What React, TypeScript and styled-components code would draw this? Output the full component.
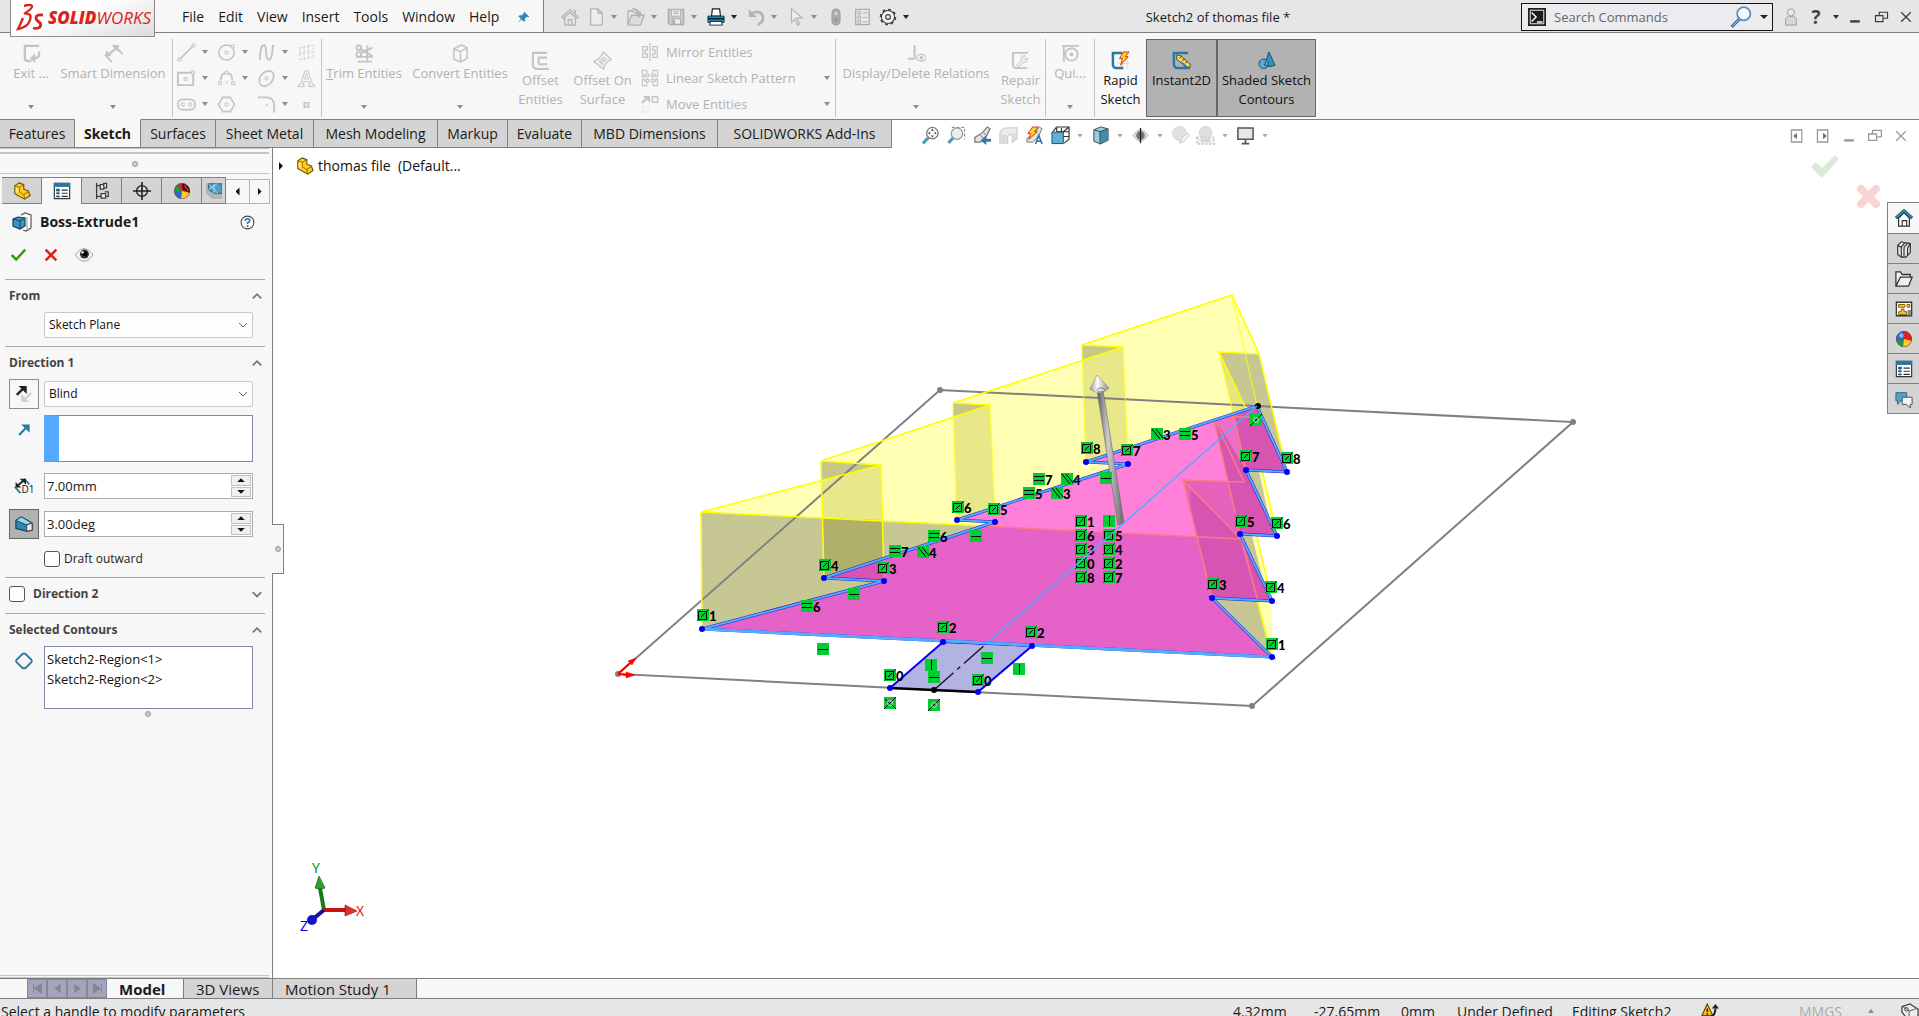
import React from "react";
import styled, { createGlobalStyle, css } from "styled-components";

const GlobalStyle = createGlobalStyle`
  * { box-sizing: border-box; }
  html, body, #root { height: 100%; margin: 0; }
  body {
    overflow: hidden;
    background: #fff;
    color: #1a1a1a;
    font: 14px/20px "Open Sans", "Noto Sans", sans-serif;
  }
  button, input, select { font: inherit; color: inherit; margin: 0; }
  button { padding: 0; border: 0; background: none; }
  ul { list-style: none; margin: 0; padding: 0; }
  h1, h2, h3, p { margin: 0; font-size: inherit; font-weight: inherit; }
  svg { display: block; flex: none; }
`;

/* ---------- icons ---------- */

const G = "#c4c4c4";
const D = "#3c3c3c";
const B = "#2878a0";

const glyphs: Record<string, React.ReactNode> = {
  exit: <><path d="M18 2H3v13q0 3 4 3h3" stroke={G} strokeWidth="2.4" /><path d="M18 8v3q0 4-6 4" stroke={G} strokeWidth="2.4" /><path d="M14 10l-6 5 6 5z" fill={G} /></>,
  smart: <><path d="M1 11l7 8M12 3l8 8" stroke={G} strokeWidth="2" /><path d="M5 11L12 5" stroke={G} strokeWidth="2.4" /><path d="M2 13V6l6 7zM8 1h8l-2 7z" fill={G} /></>,
  line: <><path d="M3 17L17 3" stroke={G} strokeWidth="1.600" /><path d="M1 16h3v3H1zM16 1h3v3h-3z" stroke={G} fill="#f7f7f7" /></>,
  circle: <><circle cx="10" cy="10" r="8" stroke={G} strokeWidth="1.600" /><path d="M8.500 8.500h3v3h-3zM15 2h3v3h-3z" stroke={G} fill="#f7f7f7" /></>,
  spline: <path d="M3 18C3 8 5 1 8 2.500s0 14 4 15 4-9 5-15.500" stroke={G} strokeWidth="2" />,
  plane: <><path d="M3 5l14-3v13L3 18zM7.500 4v13M12 3v13M3 11l14-2" stroke={G} strokeDasharray="2 1.500" /></>,
  rect: <><path d="M1 4h16v13H1z" stroke={G} strokeWidth="2" /><path d="M7.500 9h3v3h-3zM15.500 2h3v3h-3z" stroke={G} fill="#f7f7f7" /></>,
  arc: <><path d="M4 12q0-8 6-8t6 8" stroke={G} strokeWidth="1.800" /><path d="M1.500 13.500h3v3h-3zM15.500 13.500h3v3h-3zM8.500 2.500h3v3h-3z" stroke={G} fill="#f7f7f7" /><path d="M8 12l4 4M12 12l-4 4" stroke={G} strokeWidth=".6" /></>,
  ellipse: <><ellipse cx="10" cy="10" rx="9" ry="6.500" transform="rotate(-50 10 10)" stroke={G} strokeWidth="1.800" /><path d="M8.500 8.500h3v3h-3z" stroke={G} /></>,
  text: <><path d="M1.500 18.500v-2h2L8.500 2h3l5 14.500h2v2h-6v-2H14l-1-3H7l-1 3h1.500v2zM8 10.500h4l-2-6z" stroke={G} /></>,
  slot: <><rect x="1" y="4.500" width="18" height="11" rx="5" stroke={G} strokeWidth="1.800" /><path d="M4.500 8.500h3v3h-3zM12.500 8.500h3v3h-3z" stroke={G} /></>,
  hexagon: <><path d="M6 2.500h8l4.500 7.500-4.500 7.500H6L1.500 10z" stroke={G} strokeWidth="1.600" /><path d="M8.500 8.500h3v3h-3z" stroke={G} /></>,
  fillet: <><path d="M1 2.500h9q8 0 8 9v7" stroke={G} strokeWidth="2" /><path d="M9 9l3 3M12 9l-3 3" stroke={G} strokeWidth=".7" /></>,
  point: <path d="M7.500 8h5v5h-5z" stroke={G} strokeWidth="1.400" fill="#e4e4e4" />,
  trim: <><path d="M1 13.500h18M13 1v18M3 18.500h15" stroke={G} strokeWidth="1.800" /><circle cx="4" cy="4" r="2.500" stroke={G} strokeWidth="2" /><circle cx="4" cy="11" r="2.500" stroke={G} strokeWidth="2" /><path d="M6 5.500l12 7M6 9.500L18 4" stroke={G} strokeWidth="2.400" /></>,
  convert: <><path d="M3 5l8-4 6 3v11l-7 4-7-3zM3 5l7 3 7-4M10 8v11" stroke={G} strokeWidth="1.600" /></>,
  offset: <path d="M17 2H2v12q0 5 5 5h12M17 7H8v5q0 2 2 2h7" stroke={G} strokeWidth="2.200" />,
  surface: <><path d="M11 1l8 8q-7 3-8 10L1 11Q8 8 11 1z" stroke={G} strokeWidth="1.500" /><path d="M11.500 6l3 3q-4 2-5 5.500l-3.500-4q4-1.500 5.500-4.500z" stroke={G} fill="#ddd" /></>,
  mirror: <path d="M10 0v20M2 4v12h5v-4H4.500V8H7V4zM18 4v12h-5v-4h2.500V8H13V4z" stroke={G} strokeWidth="1.400" />,
  pattern: <path d="M1.500 1.500v7h2v-2h2v2h3v-3h-2v-4zM18.500 1.500v7h-2v-2h-2v2h-3v-3h2v-4zM1.500 18.500v-7h2v2h2v-2h3v3h-2v4zM18.500 18.500v-7h-2v2h-2v-2h-3v3h2v4z" stroke={G} strokeWidth="1.200" />,
  move: <><path d="M12.500 2h6v6h-6z" stroke={G} strokeWidth="1.600" /><path d="M1 9l5-5" stroke={G} strokeWidth="2.400" /><path d="M2 1h8v8z" fill={G} /><path d="M2 13h6v6H2z" stroke={G} strokeDasharray="1 2" /></>,
  relations: <><path d="M8 1v13M1 15.500h8" stroke={G} strokeWidth="2.200" /><ellipse cx="15" cy="14.500" rx="5" ry="3.500" stroke={G} strokeWidth="1.400" /><circle cx="15" cy="14.500" r="2" fill={G} /></>,
  repair: <><path d="M18 2H2v12q0 4 4 4h11" stroke={G} strokeWidth="2" /><path d="M15 5a3.500 3.500 0 0 0-4 5l-5 5 2 2 5-5a3.500 3.500 0 0 0 4-5l-2 2-2-2z" fill="#eee" stroke={G} /></>,
  snaps: <><path d="M1 2h18M3 2v17" stroke={G} strokeWidth="2" /><circle cx="11" cy="11" r="6.500" stroke={G} strokeWidth="2" /><circle cx="11" cy="11" r="2" fill={G} /></>,
  rapid: <><path d="M12 18V8M7 13h12M17 6v13" stroke="#d8d8d8" /><path d="M12 2H2v12q0 4 4 4h7" stroke={B} strokeWidth="2.600" /><path d="M13 1h6l-4 5h3l-8 9 2-7H9z" fill="#fc3" stroke="#c33c10" /></>,
  instant: <><path d="M17 2H2v12q0 4 4 4h13" stroke={B} strokeWidth="2.600" /><path d="M5 4l4 1 10 9v3H16L5 9z" fill="#fd4" stroke="#444" /><path d="M8 8l2-3M11 10.500l2-2.500M14 13l2-2.500" stroke="#444" /><path d="M9 10l9 8h-4z" fill={B} /></>,
  shaded: <><path d="M12.500 1L19 15q-6 3-11 0z" fill="#3590bd" stroke="#17506e" /><circle cx="7" cy="13.500" r="5" fill="#5aabcf" stroke="#17506e" /><path d="M9.500 10L8 15q2 1 4 .5" stroke="#17506e" /></>,
  home: <path d="M1 10l9-8 9 8-1.500 1.500L10 5l-7.500 6.500zM4 11v8h12v-8M8 19v-6h4v6M14 3h2v3" stroke="#b4b4b4" strokeWidth="1.400" />,
  file: <path d="M4 1h8l5 5v13H4zM12 1v5h5" stroke="#b4b4b4" strokeWidth="1.500" fill="#eee" />,
  open: <><path d="M1 3h5l2 2h7v3M1 3v16l4-11h14l-4 11H1" stroke="#b4b4b4" strokeWidth="1.500" fill="#dcdcdc" /><path d="M6 1q7 0 7 6" stroke="#b4b4b4" strokeWidth="2" /><path d="M9 6l4 5 4-5z" fill="#b4b4b4" /></>,
  save: <><path d="M1.500 1.500h17v17h-15l-2-2z" fill="#c9c9c9" stroke="#aaa" strokeWidth="1.400" /><path d="M5 2h10v7H5z" fill="#eee" stroke="#b4b4b4" /><path d="M7 4h6M7 6h6" stroke="#aaa" /><path d="M6 12h9v6H6z" fill="#eee" stroke="#aaa" /><path d="M8 13v5" stroke="#aaa" strokeWidth="2" /></>,
  print: <><path d="M5 9L6 1h8l1 8z" fill="#fff" stroke="#222" strokeWidth="1.300" /><path d="M1 9h18v7H1z" fill="#2b87ad" stroke="#103a50" /><path d="M1 12h18" stroke="#0a2b3c" strokeWidth="2" /><path d="M4 15h12l1 4H3z" fill="#fff" stroke="#222" /></>,
  undo: <><path d="M5 6q9-4 12 2t-5 11" stroke="#b4b4b4" strokeWidth="3" /><path d="M2 1v9h9z" fill="#b4b4b4" /></>,
  cursor: <path d="M5 1v15l4-4 3 7 2-1-3-7h6z" fill="#eee" stroke="#b4b4b4" strokeWidth="1.300" />,
  traffic: <><rect x="5.500" y="1" width="9" height="18" rx="4.500" fill="#aaa" stroke="#999" /><circle cx="10" cy="6" r="2.200" fill="#ccc" /><circle cx="10" cy="13.500" r="2.200" fill="#999" /></>,
  options: <><path d="M3 1.500h15v17H3z" fill="#e9e9e9" stroke="#aaa" strokeWidth="1.400" /><path d="M5.500 4h3v3h-3zM5.500 9h3v3h-3zM5.500 14h3v3h-3zM11 5.500h5M11 10.500h5M11 15.500h5" stroke="#aaa" /></>,
  gear: <><circle cx="10" cy="10" r="7.300" fill="#f4f4f4" stroke={D} strokeWidth="1.200" /><circle cx="10" cy="10" r="8.300" stroke={D} strokeWidth="1.800" strokeDasharray="3.200 3.300" /><circle cx="10" cy="10" r="2.600" stroke={D} strokeWidth="1.300" /></>,
  pin: <path d="M11 1l8 8-2 .5-2-.5-3 3q1 3-1 5l-4-4-6 6 5-7-4-4q2-2 5-1l3-3z" fill="#2e86b5" />,
  prompt: <><path d="M1 1h18v18H1z" fill="#1c1c1c" stroke="#222" strokeWidth="2" /><path d="M2.500 2.500h15v15h-15z" stroke="#fff" /><path d="M4 5l5 5-5 5M10 15.500h6" stroke="#fff" strokeWidth="1.600" /></>,
  magnify: <><circle cx="12.500" cy="7" r="6" fill="#f4f9fd" stroke="#5c8fb8" strokeWidth="1.600" /><path d="M8.500 12L1.500 19" stroke="#34658c" strokeWidth="2.800" /><path d="M8.500 12L2 18.500" stroke="#9cc0dd" strokeWidth="1" /></>,
  person: <><path d="M4 19v-5q0-5 6-5t6 5v5z" fill="#d8d8d8" stroke="#999" /><circle cx="10" cy="5" r="4" fill="#e8e8e8" stroke="#999" /></>,
  minimise: <path d="M4 14h12v3H4z" fill={D} />,
  restore: <path d="M7 7V3h11v8h-5M2 7.500h10v8H2z" stroke={D} strokeWidth="1.600" />,
  close: <path d="M4 4l12 12M16 4L4 16" stroke={D} strokeWidth="1.600" />,
  minLight: <path d="M4 14h12v3H4z" fill="#999" />,
  restoreLight: <path d="M7 7V3h11v8h-5M2 7.500h10v8H2z" stroke="#999" strokeWidth="1.600" />,
  closeLight: <path d="M4 4l12 12M16 4L4 16" stroke="#999" strokeWidth="1.600" />,
  paneLeft: <><path d="M3 2.500h13v15H3z" stroke="#999" strokeWidth="1.600" /><path d="M10 6v8l-5-4z" fill="#777" /></>,
  paneRight: <><path d="M3 2.500h13v15H3z" stroke="#999" strokeWidth="1.600" /><path d="M10 6v8l5-4z" fill="#777" /></>,
  zoomFit: <><circle cx="12" cy="7.500" r="6" fill="#fafafa" stroke="#777" strokeWidth="1.300" /><path d="M12 3l1.500 2h-3zM12 12l1.500-2h-3zM7.500 7.500l2-1.500v3zM16.500 7.500l-2-1.500v3z" fill="#333" /><path d="M8 12l-6 6.500" stroke="#4c9cc0" strokeWidth="3.200" /></>,
  zoomArea: <><path d="M5 1.500h13.500V14" stroke="#777" strokeDasharray="3 2" /><circle cx="10.500" cy="8" r="6" fill="#e6eef2" stroke="#999" strokeWidth="1.300" /><path d="M6.500 12.500L1.500 18" stroke="#4c9cc0" strokeWidth="3.200" /></>,
  prev: <><path d="M15 1l3 2-4 8-6 6H2v-5l8-5z" fill="#e2e2e2" stroke="#777" strokeWidth="1.300" /><path d="M7 9l4 4M11 7l3 3" stroke="#777" /><path d="M19 15h-6" stroke={B} strokeWidth="3" /><path d="M14 10v10l-6-5z" fill={B} /></>,
  section: <><path d="M1 7q2-5 9-5h9v11l-5 4V9q-4-1-5 2v7H1z" fill="#ededed" stroke="#d0d0d0" strokeWidth="1.400" /><path d="M2 9h6v8H2zM14 8h4v5l-4 3z" fill="#dcdcdc" /></>,
  dynamic: <><path d="M15 1l3 2-4 8-6 6H2v-4l8-6z" fill="#e2e2e2" stroke="#777" /><path d="M8 1h6l-4 5h3l-9 8 2-6H3z" fill="#fc3" stroke="#c33c10" /><path d="M11 19l3.500-9L18 19M12 16h5" stroke={B} strokeWidth="1.700" /></>,
  orient: <><path d="M6 1h13v13l-5 4M6 1L2 6M11 2v13M19 6H6M19 11H6M6 2v4M13 6l6-5" stroke="#333" strokeWidth="1.200" /><path d="M1 6.500h12v12H1z" fill="#5fb1d4" stroke="#1c4d66" /></>,
  display: <><path d="M3 4l7-3 8 2v12l-8 4-7-3z" fill="#8fd0e8" stroke="#444" /><path d="M9 6l9-3v12l-8 4z" fill="#3f8cab" /><path d="M9.500 6v13M3 4l6.500 2L18 3" stroke="#444" /></>,
  hideShow: <><path d="M2 10q4-6 8-6t8 6q-4 6-8 6t-8-6z" fill="#ddd" stroke="#bbb" /><circle cx="10" cy="10" r="4.500" fill="#777" /><path d="M10 2v16" stroke="#222" strokeWidth="1.400" /></>,
  appearance: <><circle cx="9" cy="8" r="7.500" fill="#e2e2e2" stroke="#d8d8d8" /><path d="M9 18l2-5 6-6 2.500 2.500-6 7z" fill="#f2f2f2" stroke="#c4c4c4" /></>,
  scene: <><circle cx="10" cy="7" r="6.500" fill="#dedede" stroke="#d0d0d0" /><path d="M1 12h18v7H1z" fill="#efefef" stroke="#ccc" strokeWidth="2" strokeDasharray="2 2" /><path d="M5 13h10v4H5z" fill="#d6d6d6" /></>,
  monitor: <><path d="M2 2h16v12H2z" fill="#e8e8e8" stroke="#555" strokeWidth="1.600" /><path d="M10 14v4M6 18.500h8" stroke="#555" strokeWidth="1.800" /></>,
  part: <><path d="M2 4l5-3 5 2v5l5 2 2 5-6 4-11-6z" fill="#fc2" stroke="#6b4c00" strokeWidth="1.200" /><path d="M2 4l5 2 5-3M7 6v5l5 3 6-4M12 14l1 5" stroke="#8a6300" /><path d="M3 5.500l3 1.500v4l-3 1z" fill="#ffe27a" /></>,
  props: <><path d="M1.500 1.500h17v17h-17z" fill="#fff" stroke="#333" strokeWidth="1.300" /><path d="M1 1h18v4.500H1z" fill={B} /><path d="M4 8h3v2H4zM4 12h3v1H4zM4 15.500h3v1H4z" fill={B} stroke="#17506e" /><path d="M9.500 9h7M9.500 12.500h7M9.500 16h7" stroke="#333" strokeWidth="1.200" /></>,
  config: <><path d="M4 1v18M4 4h4M4 16h5" stroke={D} strokeWidth="1.400" /><path d="M8 3h4v5H8zM11 1.500h4v5h-3M9 13h5v5H9zM13 11h4v5h-3" stroke={D} strokeWidth="1.400" fill="#efefef" /></>,
  target: <><circle cx="10" cy="10" r="6" stroke="#222" strokeWidth="1.600" /><path d="M10 0v20M0 10h20" stroke="#222" strokeWidth="1.800" /></>,
  ball: <><circle cx="10" cy="10" r="8.500" fill="#d22" stroke="#555" /><path d="M10 10L2 12a8.500 8.500 0 0 0 7 6.400z" fill="#1a9c38" /><path d="M10 10l-1 8.400A8.500 8.500 0 0 0 18 12z" fill="#fc2" /><path d="M10 10L9 1.600A8.500 8.500 0 0 0 2 12z" fill="#2468d8" /><circle cx="7" cy="6" r="2.500" fill="#fff" opacity=".5" /></>,
  ballCut: <><circle cx="10" cy="10" r="8.500" fill="#d22" stroke="#555" /><path d="M10 10L2 12a8.500 8.500 0 0 0 7 6.400z" fill="#2468d8" /><path d="M10 10l-8 2A8.500 8.500 0 0 1 4 4z" fill="#1a9c38" /><path d="M10 10l-1 8.400A8.500 8.500 0 0 0 18 12z" fill="#fc2" /><path d="M11 9l-1-7a8.500 8.500 0 0 1 8.400 10z" fill="#2a1414" /><path d="M13 4l4 6" stroke="#d22" strokeWidth="2" /></>,
  view3d: <><path d="M0 0h20v20H8l-8-7z" fill="#b4b4b8" /><path d="M3 1h17v12H10L3 8z" fill="#4a9fc4" stroke="#17506e" /><path d="M3 1l12 12M3 8L14 1M10 13V1" stroke="#cfe9f4" /></>,
  boss: <><path d="M9 3l4-2 6 2v13l-5 3-3-1" fill="#fff" stroke="#555" strokeWidth="1.200" /><path d="M15 5v13" stroke="#999" /><path d="M1 7l5-2 7 1v8l-5 3-7-3z" fill="#3c97bf" stroke="#143f57" strokeWidth="1.200" /><path d="M1 7l7 2 5-3M8 9v8" stroke="#143f57" /></>,
  help: <><circle cx="10" cy="10" r="8.500" fill="#fff" stroke="#444" strokeWidth="1.400" /><path d="M7 8q0-3 3-3t3 2.500Q13 9.500 10 10.500V12" stroke={B} strokeWidth="2.200" /><circle cx="10" cy="14.800" r="1.400" fill={B} /></>,
  ok: <path d="M2 11l2-2 4 4L17 3l2 2L8 17z" fill="#2f9e0c" />,
  cancel: <path d="M4 4l12 12M16 4L4 16" stroke="#e02010" strokeWidth="2.800" />,
  eye: <><path d="M0 10q5-7 10-7t10 7q-5 7-10 7T0 10z" fill="#f2f2f2" stroke="#999" /><circle cx="10.500" cy="9" r="5" fill="#333" /><circle cx="11" cy="8.500" r="2.800" fill="#000" /><circle cx="8.500" cy="7" r="1.300" fill="#fff" /></>,
  reverse: <><path d="M2 11l7-7" stroke="#222" strokeWidth="2.600" /><path d="M4 1h9v9z" fill="#222" /><path d="M18 9l-6 6" stroke="#d0d0d0" strokeWidth="2.400" /><path d="M7 10v9h9z" fill="#d0d0d0" /></>,
  dirArrow: <><path d="M3 17l9-9" stroke={B} strokeWidth="3" /><path d="M6 2h12v12z" fill={B} /></>,
  depth: <><path d="M1 11l7 8M13 1l6 7" stroke={B} strokeWidth="2.200" /><path d="M5 9l6-5" stroke="#222" strokeWidth="2.400" /><path d="M2 12V5l7 7zM7 1h8v7z" fill="#222" /></>,
  draft: <><path d="M1 6l6-4 12 7v8l-6 1-12-3z" fill="#2f86ad" stroke="#123e55" strokeWidth="1.200" /><path d="M1 6l6-4 12 7-6 2z" fill="#9ad4ea" stroke="#123e55" /><path d="M13 11l6-2v8l-6 1z" fill="#eee" stroke="#333" /></>,
  diamond: <path d="M10 1.500q1 0 2 1l6 6q1.500 1.500 0 3l-6 6q-2 1.500-4 0l-6-6q-1.500-1.500 0-3l6-6q1-1 2-1z" stroke={B} strokeWidth="2" />,
  house: <><path d="M4 10v9h12v-9l-6-6z" fill="#fff" stroke="#333" strokeWidth="1.400" /><path d="M1 10l9-8 9 8" stroke="#17506e" strokeWidth="3.400" /><path d="M1.500 9.500l8.500-7.500 8.500 7.500" stroke="#3c97bf" strokeWidth="1.300" /><path d="M8 19v-6h5v6" stroke="#333" strokeWidth="1.300" /></>,
  books: <path d="M3 6l4-4 4 1 6 1v10l-5 5H7l-4-3zM3 6l4 2v11M7 8l4-5M10 8v11M14 9v8M10 8l4-4M14 9l3-5" stroke="#333" strokeWidth="1.300" fill="#e6e6e6" />,
  folder: <path d="M1 18V2h5l2 3h9v3M1 18L6 8h13l-4 10z" stroke="#333" strokeWidth="1.400" fill="#eee" />,
  palette: <><path d="M1.500 2.500h17v15h-17z" fill="#fff" stroke="#333" strokeWidth="1.400" /><path d="M4 5h7v3H4zM13.500 5h3v3h-3zM4 13h3v-3h3v3h3v3H4z" fill="#fc2" stroke="#7a5600" /><path d="M14 11h4v6h-4z" fill="#888" /></>,
  chat: <><path d="M1 3h12v9H6l-3 4v-4H1z" fill="#4da3c8" stroke="#2b5d74" /><path d="M8 8h11v8h-2v4l-4-4H8z" fill="#f4f4f4" stroke="#444" /></>,
  first: <path d="M4 3v14M16 3v14L6 10z" fill="#82849e" stroke="#82849e" strokeWidth="1.600" />,
  back: <path d="M15 3v14L5 10z" fill="#82849e" />,
  next: <path d="M5 3v14l10-7z" fill="#82849e" />,
  last: <path d="M16 3v14M4 3v14l10-7z" fill="#82849e" stroke="#82849e" strokeWidth="1.600" />,
  rebuild: <><path d="M6 13h9v7H6z" fill={B} /><path d="M7 1l6 13H1z" fill="#fb2" stroke="#664400" strokeWidth="1.300" /><path d="M7 6v4M7 11v2" stroke="#222" strokeWidth="1.600" /><path d="M11 15q5-2 5-9" stroke="#222" strokeWidth="2.200" /><path d="M12 6l4-5 4 5z" fill="#222" /></>,
  tag: <><path d="M1 4l9-3 9 6v7l-5 5H8L1 10z" fill="#eee" stroke="#444" strokeWidth="1.400" /><circle cx="6" cy="7" r="2" stroke="#444" /><path d="M9 19V9l9-3M9 9L2 4" stroke="#444" /></>,
  up: <path d="M3 14l7-7 7 7" stroke="#777" strokeWidth="3" />,
  down: <path d="M3 7l7 7 7-7" stroke="#777" strokeWidth="3" />,
  chevron: <path d="M2 6l8 8 8-8" stroke="#555" strokeWidth="1.800" />,
};

const Icon = ({ name, size = 18 }: { name: string; size?: number }) => (
  <svg width={size} height={size} viewBox="0 0 20 20" fill="none" aria-hidden="true">{glyphs[name]}</svg>
);

const Caret = styled.span<{ $color?: string; $up?: boolean; $w?: number }>`
  width: ${p => p.$w ?? 8}px;
  height: 4px;
  flex: none;
  background: ${p => p.$color ?? "#8c8c8c"};
  clip-path: ${p => (p.$up ? "polygon(0 100%, 100% 100%, 50% 0)" : "polygon(0 0, 100% 0, 50% 100%)")};
`;

const SideCaret = styled.span<{ $left?: boolean }>`
  width: 4px;
  height: 8px;
  background: #111;
  clip-path: ${p => (p.$left ? "polygon(100% 0, 100% 100%, 0 50%)" : "polygon(0 0, 0 100%, 100% 50%)")};
`;

/* ---------- frame ---------- */

const Frame = styled.div`
  height: 100vh;
  display: flex;
  flex-direction: column;
  overflow: hidden;
`;

const TitleBar = styled.header`
  display: flex;
  align-items: center;
  height: 33px;
  flex: none;
  padding: 2px 0 0 10px;
  background: #e6e6e6;
  border-bottom: 1px solid #808080;
`;

const Logo = styled.h1`
  position: relative;
  z-index: 1;
  align-self: flex-start;
  display: flex;
  align-items: center;
  gap: 4px;
  width: 145px;
  height: 37px;
  margin-top: -2px;
  padding: 0 5px;
  border: 1px solid #8c8c8c;
  border-top: 0;
  background: linear-gradient(160deg, #fff 40%, #dcdcdc);
  color: #d9241c;
  font: italic 17px/24px "Open Sans", sans-serif;
  b { font-weight: 800; }
`;

const MenuBar = styled.nav`
  display: flex;
  align-items: center;
  align-self: stretch;
  gap: 14px;
  width: 389px;
  margin-top: -2px;
  padding: 2px 13px 0 27px;
  background: #f7f7f7;
  border-right: 1px solid #808080;
  svg { margin-left: auto; }
`;

const MenuItem = styled.button`
  line-height: 20px;
`;

const QuickBar = styled.div`
  display: flex;
  align-items: center;
  padding: 0 0 0 17px;
`;

const Tool = styled.button<{ $w?: number }>`
  display: flex;
  align-items: center;
  gap: 6px;
  width: ${p => p.$w ?? 20}px;
  height: 22px;
  flex: none;
`;

const DocTitle = styled.p`
  flex: 1;
  min-width: 0;
  text-align: center;
  white-space: nowrap;
  font-size: 13px;
`;

const SearchBox = styled.label`
  display: flex;
  align-items: center;
  gap: 8px;
  width: 252px;
  height: 28px;
  padding: 0 4px 0 6px;
  border: 1px solid #111;
  background: #ebecf0;
  input {
    flex: 1;
    min-width: 0;
    padding: 0;
    border: 0;
    outline: 0;
    background: none;
    font-size: 13px;
  }
  input::placeholder { color: #666; opacity: 1; }
`;

const WindowTools = styled.div`
  display: flex;
  align-items: center;
  padding-left: 8px;
`;

const WindowButton = styled.button<{ $w: number }>`
  display: flex;
  justify-content: center;
  align-items: center;
  width: ${p => p.$w}px;
  height: 24px;
  color: #444;
  font-size: 19px;
  font-weight: 700;
`;

/* ---------- ribbon ---------- */

const Ribbon = styled.div`
  display: flex;
  flex: none;
  height: 86px;
  padding: 6px 0 2px 8px;
  background: #f7f7f7;
`;

const Rule = styled.span`
  width: 1px;
  flex: none;
  background: #c4c4c4;
`;

const RibbonButton = styled.button<{ $w: number; $low?: boolean; $on?: boolean; $live?: boolean }>`
  display: flex;
  flex-direction: column;
  align-items: center;
  flex: none;
  width: ${p => p.$w}px;
  padding-top: ${p => (p.$low ? 12 : 5)}px;
  color: ${p => (p.$live ? "#111" : "#b2b2b2")};
  font-size: 13px;
  line-height: 19px;
  ${p => p.$on && css`
    background: #b2b2b2;
    border: 1px solid #666;
    padding-top: 11px;
  `}
  span.label { white-space: nowrap; margin-top: 1px; text-align: center; }
  > ${Caret} { margin-top: auto; margin-bottom: 8px; }
`;

const SketchGrid = styled.div`
  display: grid;
  grid-template-columns: repeat(3, 40px) 20px;
  grid-template-rows: repeat(3, 26px);
  align-items: center;
  padding: 0 4px;
`;

const StackColumn = styled.div`
  display: grid;
  grid-template-rows: repeat(3, 26px);
  width: 197px;
  padding: 0 5px 0 3px;
`;

const StackButton = styled.button`
  display: flex;
  align-items: center;
  gap: 7px;
  color: #b2b2b2;
  font-size: 13px;
  ${Caret} { margin-left: auto; }
`;

const TabRow = styled.div`
  display: flex;
  align-items: stretch;
  flex: none;
  height: 29px;
`;

const RibbonTabs = styled.nav`
  display: flex;
  border-bottom: 1px solid #808080;
`;

const RibbonTab = styled.button<{ $w: number; $active?: boolean }>`
  width: ${p => p.$w}px;
  background: ${p => (p.$active ? "#f7f7f7" : "#d4d4d4")};
  border-right: 1px solid #808080;
  border-top: 1px solid ${p => (p.$active ? "#f7f7f7" : "#808080")};
  font-weight: ${p => (p.$active ? 700 : 400)};
  font-size: 14px;
  white-space: nowrap;
`;

const ViewTools = styled.div`
  display: flex;
  align-items: center;
  flex: 1;
  padding: 3px 8px 0 29px;
  border-top: 1px solid #808080;
`;

const ViewTool = styled(Tool)`
  gap: 7px;
`;

const Spacer = styled.span`
  flex: 1;
`;

/* ---------- property panel ---------- */

const Workspace = styled.main`
  display: flex;
  flex: 1;
  min-height: 0;
`;

const Panel = styled.aside`
  position: relative;
  width: 273px;
  flex: none;
  display: flex;
  flex-direction: column;
  background: #f7f7f7;
  border-right: 1px solid #808080;
  font-size: 12px;
`;

const Grip = styled.div<{ $h: number }>`
  display: flex;
  justify-content: center;
  align-items: center;
  height: ${p => p.$h}px;
  margin-right: 3px;
  border: solid #c4c4c4;
  border-width: 1px 0;
`;

const Dot = styled.span`
  width: 6px;
  height: 6px;
  border: 1px solid #999;
  border-radius: 50%;
  background: #ccc;
`;

const PanelTabs = styled.div`
  display: flex;
  height: 27px;
  margin: 3px 2px 0;
`;

const PanelTab = styled.button<{ $active?: boolean; $w?: number }>`
  display: flex;
  align-items: center;
  justify-content: center;
  flex: none;
  overflow: hidden;
  width: ${p => p.$w ?? 40}px;
  background: ${p => (p.$active ? "#f7f7f7" : "#d4d4d4")};
  border: solid #808080;
  border-width: 1px 1px ${p => (p.$active ? 0 : 1)}px 0;
`;

const PanelArrow = styled(PanelTab)`
  background: #f7f7f7;
  border-color: #b4b4b4;
  margin-top: 2px;
`;

const PanelHead = styled.div`
  display: flex;
  align-items: center;
  gap: 8px;
  padding: 7px 17px 8px 12px;
  font-size: 14px;
  font-weight: 700;
  line-height: 22px;
  button { margin-left: auto; }
`;

const Actions = styled.div`
  display: flex;
  align-items: center;
  gap: 15px;
  height: 38px;
  padding: 0 9px 10px;
`;

const Section = styled.section<{ $h: number }>`
  min-height: ${p => p.$h}px;
  margin: 0 7px 0 5px;
  border-top: 1px solid #a8a8a8;
`;

const SectionHead = styled.div`
  display: flex;
  align-items: center;
  height: 32px;
  padding: 0 2px 0 4px;
  color: #444;
  font-size: 12px;
  font-weight: 700;
  button { margin-left: auto; }
`;

const Field = styled.div<{ $h: number; $mb?: number }>`
  display: grid;
  grid-template-columns: 30px 209px;
  gap: 5px;
  align-items: center;
  height: ${p => p.$h}px;
  margin: 0 0 ${p => p.$mb ?? 0}px 4px;
`;

const SideIcon = styled.span<{ $h?: number }>`
  display: flex;
  justify-content: center;
  align-items: center;
  align-self: start;
  height: ${p => p.$h ?? 30}px;
`;

const DepthMark = styled.span`
  display: flex;
  align-items: flex-end;
  justify-content: center;
  font: 10px/10px "Open Sans", sans-serif;
  color: #111;
  svg { margin-right: -8px; }
`;

const SquareButton = styled.button<{ $on?: boolean }>`
  display: flex;
  justify-content: center;
  align-items: center;
  width: 30px;
  height: 30px;
  border: 1px solid ${p => (p.$on ? "#666" : "#8c8c8c")};
  background: ${p => (p.$on ? "#b2b2b2" : "#f7f7f7")};
`;

const SelectBox = styled.span`
  display: grid;
  align-items: center;
  > * { grid-area: 1 / 1; }
  svg { justify-self: end; margin-right: 5px; pointer-events: none; }
  select {
    appearance: none;
    height: 26px;
    padding: 0 4px;
    border: 1px solid #c8c8c8;
    border-radius: 2px;
    background: #fdfdfd;
    color: #111;
  }
`;

const ActiveList = styled.div`
  align-self: stretch;
  border: 1px solid #7f88a8;
  border-left: 15px solid #55aaff;
  background: #fff;
`;

const Spin = styled.div`
  display: flex;
  height: 26px;
  border: 1px solid #abadb3;
  background: #fff;
  input { flex: 1; min-width: 0; border: 0; padding: 0 2px; background: none; font-size: 13px; }
`;

const SpinButtons = styled.div`
  display: grid;
  grid-template-rows: 1fr 1fr;
  gap: 1px;
  width: 22px;
  padding: 1px;
  button {
    display: flex;
    justify-content: center;
    align-items: center;
    border: 1px solid #c0c0c0;
    background: #f0f0f0;
  }
`;

const Check = styled.input.attrs({ type: "checkbox" })`
  appearance: none;
  width: 16px;
  height: 16px;
  border: 1px solid #555;
  border-radius: 3px;
  background: #fff;
`;

const CheckLabel = styled.label`
  display: flex;
  align-items: center;
  gap: 4px;
  height: 30px;
  padding-left: 39px;
`;

const HeadLabel = styled.label`
  display: flex;
  align-items: center;
  gap: 8px;
`;

const ContourList = styled.ul`
  align-self: stretch;
  padding: 2px;
  border: 1px solid #7f88a8;
  background: #fff;
  color: #111;
  font-size: 13px;
  li { line-height: 20px; }
`;

const ContourGrip = styled.div`
  display: flex;
  justify-content: center;
  padding-top: 2px;
  padding-left: 26px;
`;

const PanelHandle = styled.button`
  position: absolute;
  left: 272px;
  top: 376px;
  z-index: 1;
  display: flex;
  justify-content: center;
  align-items: center;
  width: 12px;
  height: 50px;
  border: 1px solid #808080;
  border-left: 0;
  background: #f7f7f7;
`;

/* ---------- viewport ---------- */

const Viewport = styled.section`
  position: relative;
  flex: 1;
  min-width: 0;
  overflow: hidden;
  background: #fff;
`;

const TreeRoot = styled.div`
  position: absolute;
  left: 6px;
  top: 8px;
  display: flex;
  align-items: center;
  gap: 13px;
  span:last-child { display: flex; align-items: center; gap: 4px; white-space: pre; color: #111; }
`;

const TaskPane = styled.nav`
  position: absolute;
  right: 0;
  top: 54px;
  border: solid #808080;
  border-width: 1px 0 1px 1px;
`;

const TaskTab = styled.button<{ $active?: boolean }>`
  display: flex;
  justify-content: center;
  align-items: center;
  width: 31px;
  height: 30px;
  background: ${p => (p.$active ? "#f7f7f7" : "#d4d4d4")};
  & + & { border-top: 1px solid #808080; }
`;

const Confirm = styled.div`
  position: absolute;
  right: 38px;
  top: 7px;
  display: flex;
  align-items: flex-start;
  gap: 16px;
  opacity: .2;
  button + button { margin-top: 29px; }
`;

const Scene = styled.svg`
  width: 100%;
  height: 100%;
`;

type Pt = [number, number];
const pts = (list: Pt[]) => list.map(p => p.join(",")).join(" ");

const base: Record<string, Pt> = {
  A: [702, 629], B: [884, 581], C: [824, 578], D: [995, 522], E: [957, 520],
  F: [1128, 464], G: [1086, 462], H: [1257, 406], I: [1287, 472], J: [1246, 470],
  K: [1277, 536], L: [1240, 534], M: [1272, 601], N: [1212, 598], O: [1272, 657],
};
const top: Record<string, Pt> = {
  A: [701, 512], B: [881, 465], C: [821, 461], D: [990, 405], E: [953, 403],
  F: [1123, 347], G: [1082, 345], H: [1232, 295], I: [1259, 354], J: [1219, 352],
  K: [1250, 417], L: [1213, 416], M: [1244, 482], N: [1183, 480], O: [1241, 539],
};
const tree = Object.values(base);
const wall = (a: string, b: string): Pt[] => [top[a], top[b], base[b], base[a]];

type Mark = [kind: string, x: number, y: number, label?: string];
const marks: Mark[] = [
  ["sq", 703, 615, "1"], ["sq", 825, 565, "4"], ["sq", 883, 568, "3"], ["eq", 895, 551, "7"],
  ["par", 923, 552, "4"], ["eq", 934, 536, "6"], ["h", 976, 536], ["h", 854, 594],
  ["eq", 807, 606, "6"], ["sq", 958, 507, "6"], ["sq", 994, 509, "5"], ["eq", 1029, 493, "5"],
  ["par", 1057, 493, "3"], ["h", 823, 649], ["sq", 943, 627, "2"], ["sq", 1031, 632, "2"],
  ["v", 931, 665], ["h", 934, 677], ["h", 987, 658], ["v", 1019, 669], ["sq", 890, 675, "0"],
  ["sq", 978, 680, "0"], ["x", 890, 703], ["mid", 934, 705], ["eq", 1039, 479, "7"],
  ["par", 1067, 479, "4"], ["h", 1106, 478], ["sq", 1087, 448, "8"], ["sq", 1127, 450, "7"],
  ["par", 1157, 434, "3"], ["eq", 1185, 434, "5"], ["mid", 1256, 420], ["sq", 1246, 456, "7"],
  ["sq", 1287, 458, "8"], ["sq", 1241, 521, "5"], ["sq", 1277, 523, "6"], ["sq", 1213, 584, "3"],
  ["sq", 1271, 587, "4"], ["sq", 1272, 644, "1"],
  ["sq", 1081, 521, "1"], ["sq", 1081, 535, "6"], ["sq", 1081, 549, "3"], ["sq", 1081, 563, "0"],
  ["sq", 1081, 577, "8"], ["v", 1109, 521], ["sq", 1109, 535, "5"], ["sq", 1109, 549, "4"],
  ["sq", 1109, 563, "2"], ["sq", 1109, 577, "7"],
];
const markPath: Record<string, string> = {
  sq: "M-4.500-3.500h8v8h-8zM-2 2l4-4M3.500-3.500l2-2M-4.500 4.500l-1 1",
  eq: "M-5-2.500H5M-5 1.500H5",
  par: "M-5-5L3 5M-1-5L6 4",
  h: "M-5 .5H5",
  v: "M.5-5V5",
  x: "M-6 6l12-12M-5-4l4 4M1 1l5 5",
  mid: "M-6 6l12-12",
};

const ModelScene = () => (
  <Scene role="img" aria-label="Boss-Extrude1 preview">
    <defs>
      <clipPath id="treeClip"><polygon points={pts(tree)} /></clipPath>
      <linearGradient id="shaft" x1="0" x2="1"><stop offset="0" stopColor="#555" /><stop offset=".4" stopColor="#ccc" /><stop offset="1" stopColor="#666" /></linearGradient>
      <linearGradient id="cone" x1="0" x2="1"><stop offset="0" stopColor="#999" /><stop offset=".4" stopColor="#fff" /><stop offset="1" stopColor="#888" /></linearGradient>
    </defs>
    <g transform="translate(-273 -148)" fill="none">
      {/* extrusion preview */}
      <polygon fill="#ffffb3" points={pts([top.A, [822, 480], top.C, [953, 417], top.E, [1082, 360], top.G, top.H, top.I, base.I, base.J, [1263, 472], base.K, base.L, [1257, 536], base.M, base.O, top.O])} />
      <polygon fill="#c7c794" points={pts([top.A, [995, 526], base.D, base.C, base.B, base.A])} />
      <polygon fill="#e8e88a" points={pts(wall("C", "B"))} />
      <polygon fill="#c7c78a" points={pts([top.C, top.B, [822, 480]])} />
      <polygon fill="#b0b06a" points={pts([[823, 518], [882, 520], base.B, base.C])} />
      <polygon fill="#e8e88a" points={pts(wall("E", "D"))} />
      <polygon fill="#c7c78a" points={pts([top.E, top.D, [953, 417]])} />
      <polygon fill="#e8e88a" points={pts(wall("G", "F"))} />
      <polygon fill="#c7c78a" points={pts([top.G, top.F, [1082, 360]])} />
      <polygon fill="#e6e685" points={pts([top.J, top.K, base.H, [1233, 412]])} />
      <polygon fill="#c7c794" points={pts([top.J, top.I, base.I, base.H, [1245, 407]])} />
      <polygon fill="#c7c794" points={pts([base.J, [1259, 472], [1270, 521]])} />
      <polygon fill="#c7c794" points={pts([base.L, [1252, 536], [1265, 588]])} />
      <polygon fill="#c7c794" points={pts([base.N, [1258, 600], base.O])} />
      <g stroke="#808080" strokeWidth="2">
        <polygon points="618,674 940,390 1573,422 1252,706" />
      </g>
      <g fill="#808080"><circle cx="618" cy="674" r="3" /><circle cx="940" cy="390" r="3" /><circle cx="1573" cy="422" r="3" /><circle cx="1252" cy="706" r="3" /></g>
      <g stroke="#ff0" strokeWidth="1.500">
        <polyline points={pts([...Object.values(top).slice(0, 10), top.K])} />
        <path d="M701 512L1241 539" />
        {["A", "B", "C", "D", "E", "F", "G", "H", "I", "J", "K", "M", "O"].map(k => (
          <path key={k} d={`M${top[k]}L${base[k]}`} opacity={"HJDEFG".includes(k) ? 0.6 : 1} />
        ))}
      </g>
      {/* selected tree contour */}
      <polygon points={pts(tree)} fill="#ff80d8" />
      <g clipPath="url(#treeClip)">
        <polygon fill="#f06fc6" points={pts([top.L, [1256, 417], base.K, base.L])} />
        <polygon fill="#e562c8" points="701,512 1241,539 1300,720 690,700" />
        <polygon fill="#e562bd" points={pts([top.N, top.M, base.M, base.N])} />
        <polygon fill="#d655b2" points={pts([[1191, 511], [1191, 489], top.O, [1257, 600], base.N])} />
        <polygon fill="#d655b2" points={pts([[1234, 416], [1257, 406], base.I, base.J])} />
        <polygon fill="#d655b2" points={pts([top.L, [1246, 470], base.K, base.L])} />
        <polygon fill="#d655b2" points={pts([[1244, 539], base.L, base.M, [1257, 601]])} />
        <polygon fill="#d655b2" points={pts([base.B, base.C, [884, 560]])} />
        <g stroke="#ff7a80" strokeWidth="1.500">
          <path d="M701 512L1241 539L1183 480L1244 482L1213 416L1250 417M1183 480L1212 598M1213 416L1240 534M1234 416L1246 470M1241 539L1258 601M881 465L884 581" />
        </g>
      </g>
      {/* base region */}
      <polygon points="890,688 943,642 1032,646 978,692" fill="#b3b3e3" />
      <path d="M890 688L943 642L1032 646L978 692" stroke="#00f" strokeWidth="2" />
      <path d="M890 688L978 692" stroke="#000" strokeWidth="2.500" />
      <path d="M934 690L986 644" stroke="#111" strokeWidth="1.300" strokeDasharray="26 5 4 5" />
      <polygon points={pts(tree)} stroke="#22c" strokeWidth="3" />
      <polygon points={pts(tree)} stroke="#5af" strokeWidth="2" />
      <path d={`M${base.A}L${base.O}`} stroke="#5af" strokeWidth="3" />
      <g fill="#00e">
        {tree.filter(p => p !== base.H).map(p => <circle key={p.join()} cx={p[0]} cy={p[1]} r="3" />)}
        <circle cx="890" cy="688" r="3" /><circle cx="943" cy="642" r="3" /><circle cx="1032" cy="646" r="3" /><circle cx="978" cy="692" r="3" />
      </g>
      <circle cx="934" cy="690" r="3" fill="#000" /><circle cx="1258" cy="406" r="3" fill="#000" />
      {/* pull handle */}
      <path d="M1097 390L1103 390L1124 523L1118 525z" fill="url(#shaft)" stroke="#666" strokeWidth=".6" />
      <path d="M1097 375L1109 388Q1100 397 1090 389z" fill="url(#cone)" stroke="#888" strokeWidth=".6" />
      <ellipse cx="1101" cy="390" rx="4" ry="2" stroke="#888" />
      {/* relation flags */}
      <g fontFamily="Lato, sans-serif" fontWeight="900" fontSize="13">
        {marks.map(([kind, x, y, label]) => (
          <g key={`${x}-${y}`} transform={`translate(${x} ${y})`}>
            <rect x="-6" y="-6" width="12" height="12" fill="#00cc33" />
            <path d={markPath[kind]} stroke="#000" />
            {(kind === "x" || kind === "mid") && <circle r="2.500" stroke="#b9b9b9" strokeWidth="1.200" />}
            {label && <text x="6" y="6" fill="#000">{label}</text>}
          </g>
        ))}
      </g>
      <path d="M986 644L1257 406" stroke="#5af" strokeWidth="1.500" />
      {/* origin */}
      <g stroke="#f00" fill="#f00"><path d="M618 674L630 663M618 674L627 675" strokeWidth="2" /><path d="M636 658l-4 7-4-4zM635 675l-9 3v-6z" strokeWidth=".5" /></g>
      {/* view triad */}
      <path d="M324 910L320 888" stroke="#1a7a1a" strokeWidth="4" />
      <path d="M319 876l6 12q-5 2-10 0z" fill="#2fa02f" stroke="#0c4a0c" strokeWidth=".6" />
      <path d="M324 910h22" stroke="#c81414" strokeWidth="4" />
      <path d="M345 905l12 6-12 5z" fill="#e03030" stroke="#7a0808" strokeWidth=".6" />
      <path d="M324 910l-11 9" stroke="#14149a" strokeWidth="4" />
      <circle cx="312" cy="920" r="5" fill="#1414c8" />
      <g fontFamily="Open Sans, sans-serif" fontSize="14">
        <text x="312" y="873" fill="#080">Y</text>
        <text x="356" y="916" fill="#e00">X</text>
        <text x="300" y="931" fill="#00e">Z</text>
      </g>
    </g>
  </Scene>
);

/* ---------- bottom ---------- */

const BottomTabs = styled.nav`
  display: flex;
  flex: none;
  height: 21px;
  padding-left: 27px;
  border: solid #808080;
  border-width: 1px 0;
  background: #f7f7f7;
`;

const NavButton = styled.button`
  display: flex;
  justify-content: center;
  align-items: center;
  width: 20px;
  background: #a4a5bb;
  border: 1px solid #8587a0;
`;

const BottomTab = styled.button<{ $w: number; $active?: boolean }>`
  width: ${p => p.$w}px;
  padding: 0 12px;
  text-align: left;
  border-right: 1px solid #808080;
  background: ${p => (p.$active ? "#f7f7f7" : "#d4d4d4")};
  font-weight: ${p => (p.$active ? 700 : 400)};
  font-size: 15px;
  line-height: 18px;
  white-space: nowrap;
`;

const StatusBar = styled.footer`
  display: flex;
  align-items: flex-start;
  flex: none;
  height: 17px;
  overflow: hidden;
  padding: 0 0 0 1px;
  background: #e6e6e6;
  line-height: 26px;
  white-space: nowrap;
`;

const StatusItem = styled.span<{ $w: number; $dim?: boolean }>`
  width: ${p => p.$w}px;
  flex: none;
  color: ${p => (p.$dim ? "#aaa" : "inherit")};
  > svg { margin-top: 4px; }
  > ${Caret} { display: block; margin-top: 10px; }
`;

/* ---------- composition ---------- */

const sketchTools: [string, boolean][] = [
  ["line", true], ["circle", true], ["spline", true], ["plane", false],
  ["rect", true], ["arc", true], ["ellipse", true], ["text", false],
  ["slot", true], ["hexagon", false], ["fillet", true], ["point", false],
];
const quick: [string, number, boolean][] = [
  ["home", 26, false], ["file", 40, true], ["open", 40, true], ["save", 40, true], ["print", 40, true],
  ["undo", 40, true], ["cursor", 40, true], ["traffic", 26, false], ["options", 26, false], ["gear", 36, true],
];
const ribbonTabs: [string, number][] = [
  ["Features", 75], ["Sketch", 66], ["Surfaces", 75], ["Sheet Metal", 98], ["Mesh Modeling", 124],
  ["Markup", 70], ["Evaluate", 74], ["MBD Dimensions", 136], ["SOLIDWORKS Add-Ins", 174],
];
const viewTools: [string, number, boolean][] = [
  ["zoomFit", 26, false], ["zoomArea", 26, false], ["prev", 26, false], ["section", 26, false], ["dynamic", 26, false],
  ["orient", 40, true], ["display", 40, true], ["hideShow", 40, true], ["appearance", 25, false], ["scene", 40, true], ["monitor", 40, true],
];

const Spinner = ({ label, value }: { label: string; value: string }) => (
  <Spin>
    <input aria-label={label} defaultValue={value} />
    <SpinButtons>
      <button aria-label={`Increase ${label}`}><Caret $color="#111" $up /></button>
      <button aria-label={`Decrease ${label}`}><Caret $color="#111" /></button>
    </SpinButtons>
  </Spin>
);

export default function App() {
  return (
    <Frame>
      <GlobalStyle />
      <TitleBar>
        <Logo>
          <svg width="28" height="32" viewBox="0 0 28 32" fill="none" stroke="#d9241c" strokeWidth="2.400">
            <path d="M8 4q7-2 8 0t-8 8M10 12q6-1 4 6T2 27q2-4 5-11" />
            <path d="M27 13q-7-1-7 3 0 2 3 4t1 5q-2 2-7 1" strokeWidth="2.800" />
          </svg>
          <span><b>SOLID</b>WORKS</span>
        </Logo>
        <MenuBar>
          {["File", "Edit", "View", "Insert", "Tools", "Window", "Help"].map(m => <MenuItem key={m}>{m}</MenuItem>)}
          <Icon name="pin" size={13} />
        </MenuBar>
        <QuickBar>
          {quick.map(([n, w, c]) => (
            <Tool key={n} $w={w} aria-label={n}><Icon name={n} />{c && <Caret $w={6} $color={n === "print" || n === "gear" ? "#222" : "#8c8c8c"} />}</Tool>
          ))}
        </QuickBar>
        <DocTitle>Sketch2 of thomas file *</DocTitle>
        <SearchBox>
          <Icon name="prompt" />
          <input type="search" placeholder="Search Commands" aria-label="Search Commands" />
          <Icon name="magnify" size={22} />
          <Caret $color="#222" />
        </SearchBox>
        <WindowTools>
          <WindowButton $w={20} aria-label="Account"><Icon name="person" /></WindowButton>
          <WindowButton $w={30} aria-label="Help">?</WindowButton>
          <WindowButton $w={10} aria-label="Help options"><Caret $w={6} $color="#333" /></WindowButton>
          <WindowButton $w={28} aria-label="Minimise"><Icon name="minimise" size={16} /></WindowButton>
          <WindowButton $w={24} aria-label="Restore"><Icon name="restore" size={15} /></WindowButton>
          <WindowButton $w={26} aria-label="Close"><Icon name="close" size={16} /></WindowButton>
        </WindowTools>
      </TitleBar>

      <Ribbon>
        <RibbonButton $w={46}><Icon name="exit" size={19} /><span className="label">Exit ...</span><Caret $w={6} /></RibbonButton>
        <RibbonButton $w={118}><Icon name="smart" size={19} /><span className="label">Smart Dimension</span><Caret $w={6} /></RibbonButton>
        <Rule />
        <SketchGrid>
          {sketchTools.map(([n, c]) => (
            <Tool key={n} $w={c ? 40 : 20} aria-label={n}><Icon name={n} size={19} />{c && <Caret $w={6} />}</Tool>
          ))}
        </SketchGrid>
        <Rule />
        <RibbonButton $w={84}><Icon name="trim" size={19} /><span className="label"><u>T</u>rim Entities</span><Caret $w={6} /></RibbonButton>
        <RibbonButton $w={108}><Icon name="convert" size={19} /><span className="label">Convert Entities</span><Caret $w={6} /></RibbonButton>
        <RibbonButton $w={53} $low><Icon name="offset" size={19} /><span className="label">Offset<br />Entities</span></RibbonButton>
        <RibbonButton $w={71} $low><Icon name="surface" size={19} /><span className="label">Offset On<br />Surface</span></RibbonButton>
        <StackColumn>
          <StackButton><Icon name="mirror" />Mirror Entities</StackButton>
          <StackButton><Icon name="pattern" />Linear Sketch Pattern<Caret $w={6} /></StackButton>
          <StackButton><Icon name="move" />Move Entities<Caret $w={6} /></StackButton>
        </StackColumn>
        <Rule />
        <RibbonButton $w={160}><Icon name="relations" size={19} /><span className="label">Display/Delete Relations</span><Caret $w={6} /></RibbonButton>
        <RibbonButton $w={49} $low><Icon name="repair" size={19} /><span className="label">Repair<br />Sketch</span></RibbonButton>
        <Rule />
        <RibbonButton $w={48}><Icon name="snaps" size={19} /><span className="label">Qui...</span><Caret $w={6} /></RibbonButton>
        <Rule />
        <RibbonButton $w={51} $low $live><Icon name="rapid" size={19} /><span className="label">Rapid<br />Sketch</span></RibbonButton>
        <RibbonButton $w={71} $on $live><Icon name="instant" size={19} /><span className="label">Instant2D</span></RibbonButton>
        <RibbonButton $w={99} $on $live><Icon name="shaded" size={19} /><span className="label">Shaded Sketch<br />Contours</span></RibbonButton>
      </Ribbon>

      <TabRow>
        <RibbonTabs>
          {ribbonTabs.map(([t, w]) => <RibbonTab key={t} $w={w} $active={t === "Sketch"}>{t}</RibbonTab>)}
        </RibbonTabs>
        <ViewTools>
          {viewTools.map(([n, w, c]) => (
            <ViewTool key={n} $w={w} aria-label={n}><Icon name={n} size={19} />{c && <Caret $w={6} $color="#aaa" />}</ViewTool>
          ))}
          <Spacer />
          {["paneLeft", "paneRight", "minLight", "restoreLight", "closeLight"].map(n => (
            <Tool key={n} $w={n === "closeLight" ? 18 : 26} aria-label={n}><Icon name={n} size={16} /></Tool>
          ))}
        </ViewTools>
      </TabRow>

      <Workspace>
        <Panel>
          <Grip $h={5} />
          <Grip $h={21}><Dot /></Grip>
          <PanelTabs>
            <PanelTab aria-label="Feature tree"><Icon name="part" /></PanelTab>
            <PanelTab $active aria-label="Properties"><Icon name="props" /></PanelTab>
            <PanelTab aria-label="Configurations"><Icon name="config" /></PanelTab>
            <PanelTab aria-label="Dimensions"><Icon name="target" /></PanelTab>
            <PanelTab aria-label="Display"><Icon name="ballCut" /></PanelTab>
            <PanelTab $w={24} aria-label="Views"><Icon name="view3d" size={16} /></PanelTab>
            <PanelArrow $w={24} aria-label="Previous tabs"><SideCaret $left /></PanelArrow>
            <PanelArrow $w={20} aria-label="Next tabs"><SideCaret /></PanelArrow>
          </PanelTabs>
          <PanelHead><Icon name="boss" size={20} /><h2>Boss-Extrude1</h2><button aria-label="Help"><Icon name="help" size={15} /></button></PanelHead>
          <Actions>
            <button aria-label="OK"><Icon name="ok" /></button>
            <button aria-label="Cancel"><Icon name="cancel" size={18} /></button>
            <button aria-label="Preview"><Icon name="eye" /></button>
          </Actions>

          <Section $h={67}>
            <SectionHead><h3>From</h3><button aria-label="Collapse From"><Icon name="up" size={12} /></button></SectionHead>
            <Field $h={26}>
              <SideIcon $h={26} />
              <SelectBox><select aria-label="From"><option>Sketch Plane</option></select><Icon name="chevron" size={10} /></SelectBox>
            </Field>
          </Section>

          <Section $h={231}>
            <SectionHead><h3>Direction 1</h3><button aria-label="Collapse Direction 1"><Icon name="up" size={12} /></button></SectionHead>
            <Field $h={30} $mb={6}>
              <SquareButton aria-label="Reverse direction"><Icon name="reverse" /></SquareButton>
              <SelectBox><select aria-label="End condition"><option>Blind</option></select><Icon name="chevron" size={10} /></SelectBox>
            </Field>
            <Field $h={47} $mb={9}>
              <SideIcon><Icon name="dirArrow" size={14} /></SideIcon>
              <ActiveList />
            </Field>
            <Field $h={30} $mb={8}>
              <SideIcon><DepthMark><Icon name="depth" size={16} />D1</DepthMark></SideIcon>
              <Spinner label="depth" value="7.00mm" />
            </Field>
            <Field $h={30} $mb={5}>
              <SquareButton $on aria-label="Draft"><Icon name="draft" /></SquareButton>
              <Spinner label="draft angle" value="3.00deg" />
            </Field>
            <CheckLabel><Check />Draft outward</CheckLabel>
          </Section>

          <Section $h={36}>
            <SectionHead><HeadLabel><Check />Direction 2</HeadLabel><button aria-label="Expand Direction 2"><Icon name="down" size={12} /></button></SectionHead>
          </Section>

          <Section $h={110}>
            <SectionHead><h3>Selected Contours</h3><button aria-label="Collapse Selected Contours"><Icon name="up" size={12} /></button></SectionHead>
            <Field $h={63}>
              <SideIcon><Icon name="diamond" /></SideIcon>
              <ContourList><li>Sketch2-Region&lt;1&gt;</li><li>Sketch2-Region&lt;2&gt;</li></ContourList>
            </Field>
            <ContourGrip><Dot /></ContourGrip>
          </Section>
          <Spacer />
          <Grip $h={3} />
          <PanelHandle aria-label="Collapse panel"><Dot /></PanelHandle>
        </Panel>

        <Viewport>
          <ModelScene />
          <TreeRoot><SideCaret /><span><Icon name="part" />thomas file  (Default...</span></TreeRoot>
          <Confirm>
            <button aria-label="Accept sketch">
              <svg width="30" height="24" viewBox="0 0 30 24"><path d="M1 12l5-5 6 6L25 0l4 4-17 19z" fill="#40a030" /></svg>
            </button>
            <button aria-label="Discard sketch">
              <svg width="25" height="25" viewBox="0 0 25 25"><path d="M5 5l15 15M20 5L5 20" stroke="#e03030" strokeWidth="8" strokeLinecap="round" /></svg>
            </button>
          </Confirm>
          <TaskPane>
            {["house", "books", "folder", "palette", "ball", "props", "chat"].map(n => (
              <TaskTab key={n} $active={n === "house"} aria-label={n}><Icon name={n} /></TaskTab>
            ))}
          </TaskPane>
        </Viewport>
      </Workspace>

      <BottomTabs>
        {["first", "back", "next", "last"].map(n => <NavButton key={n} aria-label={n}><Icon name={n} size={13} /></NavButton>)}
        <BottomTab $w={77} $active>Model</BottomTab>
        <BottomTab $w={89}>3D Views</BottomTab>
        <BottomTab $w={144}>Motion Study 1</BottomTab>
      </BottomTabs>
      <StatusBar>
        Select a handle to modify parameters
        <Spacer />
        <StatusItem $w={81}>4.32mm</StatusItem>
        <StatusItem $w={87}>-27.65mm</StatusItem>
        <StatusItem $w={56}>0mm</StatusItem>
        <StatusItem $w={115}>Under Defined</StatusItem>
        <StatusItem $w={129}>Editing Sketch2</StatusItem>
        <StatusItem $w={98}><Icon name="rebuild" /></StatusItem>
        <StatusItem $w={69} $dim>MMGS</StatusItem>
        <StatusItem $w={33}><Caret $w={6} $up /></StatusItem>
        <StatusItem $w={18}><Icon name="tag" /></StatusItem>
      </StatusBar>
    </Frame>
  );
}
